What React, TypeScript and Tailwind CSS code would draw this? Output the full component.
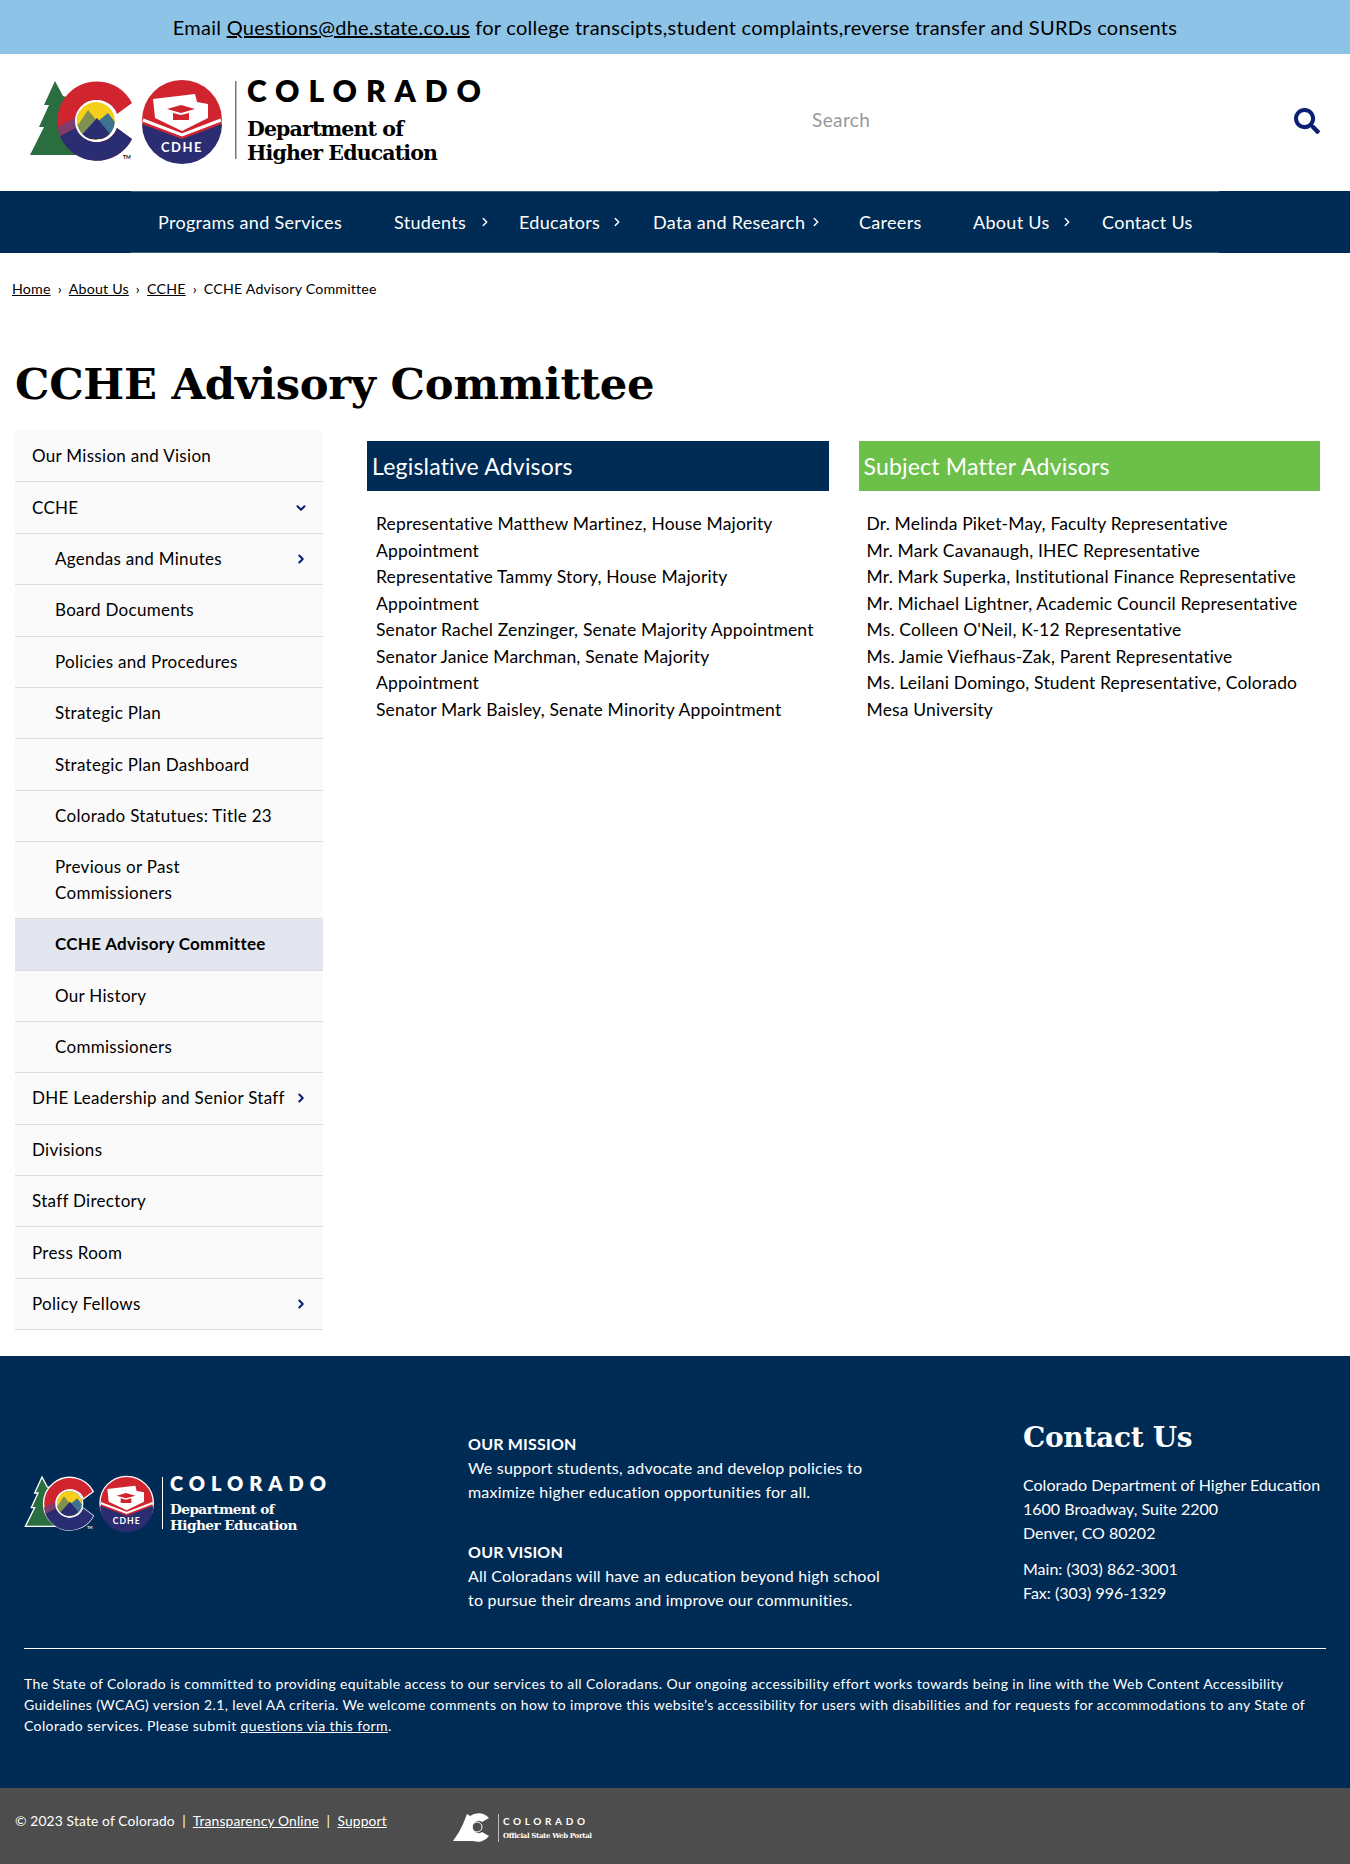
import { ChevronDown, ChevronRight } from "lucide-react";

const sans = "font-['Lato','Noto_Sans',sans-serif]";

const navItems = [
  { label: "Programs and Services", width: "w-[236px]", arrow: "" },
  { label: "Students", width: "w-[125px]", arrow: "mr-0" },
  { label: "Educators", width: "w-[134px]", arrow: "mr-[2px]" },
  { label: "Data and Research", width: "w-[206px]", arrow: "mr-[9px]" },
  { label: "Careers", width: "w-[114px]", arrow: "" },
  { label: "About Us", width: "w-[129px]", arrow: "mr-[1px]" },
  { label: "Contact Us", width: "w-[140px]", arrow: "" },
];

const sideItems = [
  { label: "Our Mission and Vision" },
  { label: "CCHE", open: true },
  { label: "Agendas and Minutes", sub: true, arrow: true },
  { label: "Board Documents", sub: true },
  { label: "Policies and Procedures", sub: true },
  { label: "Strategic Plan", sub: true },
  { label: "Strategic Plan Dashboard", sub: true },
  { label: "Colorado Statutues: Title 23", sub: true },
  { label: "Previous or Past Commissioners", sub: true },
  { label: "CCHE Advisory Committee", sub: true, active: true },
  { label: "Our History", sub: true },
  { label: "Commissioners", sub: true },
  { label: "DHE Leadership and Senior Staff", arrow: true },
  { label: "Divisions" },
  { label: "Staff Directory" },
  { label: "Press Room" },
  { label: "Policy Fellows", arrow: true },
];

const legislative = [
  "Representative Matthew Martinez, House Majority\nAppointment",
  "Representative Tammy Story, House Majority\nAppointment",
  "Senator Rachel Zenzinger, Senate Majority Appointment",
  "Senator Janice Marchman, Senate Majority\nAppointment",
  "Senator Mark Baisley, Senate Minority Appointment",
];

const subject = [
  "Dr. Melinda Piket-May, Faculty Representative",
  "Mr. Mark Cavanaugh, IHEC Representative",
  "Mr. Mark Superka, Institutional Finance Representative",
  "Mr. Michael Lightner, Academic Council Representative",
  "Ms. Colleen O'Neil, K-12 Representative",
  "Ms. Jamie Viefhaus-Zak, Parent Representative",
  "Ms. Leilani Domingo, Student Representative, Colorado Mesa University",
];

// state + CDHE marks, text colour flips for the footer version
const Logo = ({ dark = false, className = "" }: { dark?: boolean; className?: string }) => {
  const ink = dark ? "#ffffff" : "#000000";
  const edge = dark ? "#ffffff" : "none";
  const red = "#d0242e";
  const navy = "#2b2d73";
  return (
    <svg viewBox="0 0 452 84" className={`overflow-visible ${className}`}>
      <defs>
        <clipPath id="peak">
          <circle cx="66" cy="40" r="19" />
        </clipPath>
      </defs>
      <path d="M25 0 L14 24 L19 24 L9 46 L14 46 L0 74 L50 74 L50 20 L33 15 Z" fill="#2a6e3f" stroke={edge} strokeWidth="2" />
      <path d="M102 22 A39.500 39.500 0 1 0 102 58 L87 47 A21 21 0 1 1 87 33 Z" fill={red} stroke={edge} strokeWidth="2" />
      <path d="M102 58 L87 47 A21 21 0 0 1 47 46 L30 55 A39.500 39.500 0 0 0 102 58 Z" fill={navy} />
      <path d="M28 46 L45 37 L47 46 L30 55 Z" fill="#7d3d6f" />
      <g clipPath="url(#peak)">
        <rect x="45" y="19" width="42" height="42" fill="#f7cf1a" />
        <path d="M44 50 L58 29 L72 46 L66 62 Z" fill="#7f9150" />
        <path d="M66 42 L78 32 L90 48 L80 62 Z" fill="#3e7291" />
        <path d="M48 58 L67 37 L84 58 Z" fill={navy} />
      </g>
      <circle cx="66" cy="40" r="20" fill="none" stroke="#ffffff" strokeWidth="2" />
      <text x="93" y="78" fill={ink} fontSize="5" fontWeight="700" fontFamily="Lato, sans-serif">TM</text>
      <circle cx="152" cy="39" r="40" fill={red} stroke={edge} strokeWidth="2" />
      <path d="M112 43 L152 58 L192 43 A40 40 0 0 1 112 43 Z" fill={navy} />
      <path d="M113 39 L152 54 L191 39" fill="none" stroke="#ffffff" strokeWidth="3" />
      <path d="M123 18 L165 13 L167 21 L178 23 L178 37 L152 50 L125 37 Z" fill="#ffffff" />
      <path d="M137 28 L151 24 L165 28 L151 32 Z M143 32 L151 34 L159 32 L159 39 L143 39 Z" fill={red} />
      <text x="152" y="71" textAnchor="middle" fill="#ffffff" fontSize="13" fontWeight="700" fontFamily="Lato, sans-serif" letterSpacing="1.5">CDHE</text>
      <rect x="205" y="0" width="1.5" height="78" fill={dark ? "#ffffff" : "#777777"} />
      <text x="217" y="21" fill={ink} fontSize="30" fontWeight="800" fontFamily="Lato, sans-serif" textLength="234">COLORADO</text>
      <text x="217" y="55" fill={ink} fontSize="20.500" fontWeight="700" fontFamily="'DejaVu Serif', serif" textLength="157">Department of</text>
      <text x="217" y="79" fill={ink} fontSize="20.500" fontWeight="700" fontFamily="'DejaVu Serif', serif" textLength="191">Higher Education</text>
    </svg>
  );
};

const App = () => {
  return (
    <div className={`${sans} w-[1350px] bg-white text-black`}>
      <div className="h-[54px] bg-[#8dc3e6] flex items-center justify-center text-[20px] tracking-[0.25px]">
        <p>
          Email <a className="underline">Questions@dhe.state.co.us</a> for college transcipts,student complaints,reverse transfer and SURDs consents
        </p>
      </div>

      <header className="h-[137px] flex items-center">
        <div className="w-[812px] shrink-0 pl-[30px]">
          <Logo className="w-[452px] h-[84px]" />
        </div>
        <span className="text-[19px] text-[#999999] tracking-[0.4px] mb-[4px]">Search</span>
        <svg viewBox="0 0 512 512" className="w-[26px] h-[26px] ml-[424px] mb-[3px] fill-[#0b1f75]">
          <path d="M505 442.7L405.3 343c-4.5-4.5-10.6-7-17-7H372c27.6-35.3 44-79.7 44-128C416 93.1 322.900 0 208 0S0 93.100 0 208s93.100 208 208 208c48.300 0 92.700-16.400 128-44v16.300c0 6.400 2.500 12.500 7 17l99.700 99.700c9.400 9.400 24.600 9.400 33.900 0l28.300-28.300c9.400-9.400 9.400-24.600.1-34zM208 336c-70.700 0-128-57.200-128-128 0-70.700 57.200-128 128-128 70.700 0 128 57.200 128 128 0 70.700-57.200 128-128 128z" />
        </svg>
      </header>

      <nav className="h-[62px] bg-[#002b55]">
        <ul className="h-full ml-[131px] w-[1088px] flex items-center border-y border-[#3d5f80] text-white text-[18px] tracking-[0.3px]">
          {navItems.map((item) => (
            <li key={item.label} className={`${item.width} shrink-0 flex items-center pl-[27px]`}>
              <span>{item.label}</span>
              {item.arrow && <ChevronRight className={`w-[14px] h-[14px] ml-auto ${item.arrow}`} strokeWidth={2.5} />}
            </li>
          ))}
        </ul>
      </nav>

      <div className="pl-[12px] pt-[25px] text-[14.2px] h-[66px] tracking-[0.2px]">
        <a className="underline">Home</a>
        <span className="mx-[7px]">›</span>
        <a className="underline">About Us</a>
        <span className="mx-[7px]">›</span>
        <a className="underline">CCHE</a>
        <span className="mx-[7px]">›</span>
        <span>CCHE Advisory Committee</span>
      </div>

      <h1 className="pl-[15px] pt-[33px] h-[112px] text-[43.3px] leading-[64px] font-bold font-['DejaVu_Serif',serif] tracking-[-0.3px]">
        CCHE Advisory Committee
      </h1>

      <div className="flex pl-[15px] pr-[30px] h-[925px]">
        <aside className="w-[308px] shrink-0">
          {sideItems.map((item) => (
            <div
              key={item.label}
              className={`relative flex items-center min-h-[51.4px] border-b border-[#dddddd] text-[17px] leading-[26px] tracking-[0.3px] py-[12px] pr-[15px] ${item.sub ? "pl-[40px]" : "pl-[17px]"} ${item.active ? "bg-[#e3e6ee] font-bold" : "bg-[#fafafa]"}`}
            >
              <span className={item.sub && item.label.startsWith("Previous") ? "w-[180px]" : ""}>{item.label}</span>
              {item.arrow && <ChevronRight className="ml-auto w-[14px] h-[14px] text-[#0b1f75] shrink-0" strokeWidth={3.5} />}
              {item.open && <ChevronDown className="ml-auto w-[14px] h-[14px] text-[#0b1f75] shrink-0" strokeWidth={3.5} />}
            </div>
          ))}
        </aside>

        <main className="flex-1 flex gap-[30px] pl-[44px] pt-[10px]">
          <section className="flex-1">
            <h2 className="h-[50px] bg-[#002b55] text-white text-[23px] leading-[50px] pl-[5px] tracking-[0.2px]">Legislative Advisors</h2>
            <div className="pt-[20px] pl-[9px] pr-[8px] text-[17.5px] leading-[26.5px] tracking-[0.17px] whitespace-pre-line">
              {legislative.map((name) => (
                <p key={name}>{name}</p>
              ))}
            </div>
          </section>
          <section className="flex-1">
            <h2 className="h-[50px] bg-[#6cc04a] text-white text-[23px] leading-[50px] pl-[5px] tracking-[0.2px]">Subject Matter Advisors</h2>
            <div className="pt-[20px] pl-[8px] pr-[8px] text-[17.5px] leading-[26.5px] tracking-[0.17px]">
              {subject.map((name) => (
                <p key={name}>{name}</p>
              ))}
            </div>
          </section>
        </main>
      </div>

      <footer className="h-[432px] bg-[#002b55] text-white px-[24px]">
        <div className="flex h-[293px] border-b border-[#ffffff]">
          <div className="w-[444px] shrink-0 pt-[121px] pl-[1px]">
            <Logo dark className="w-[302px] h-[56px]" />
          </div>
          <div className="w-[555px] shrink-0 pt-[76px] text-[16px] leading-[24px] tracking-[0.2px]">
            <h3 className="font-bold">OUR MISSION</h3>
            <p className="w-[410px]">We support students, advocate and develop policies to maximize higher education opportunities for all.</p>
            <h3 className="font-bold mt-[36px]">OUR VISION</h3>
            <p className="w-[420px]">All Coloradans will have an education beyond high school to pursue their dreams and improve our communities.</p>
          </div>
          <div className="pt-[62px] text-[16px] leading-[24px] whitespace-nowrap">
            <h2 className="text-[28px] leading-[40px] font-bold font-['DejaVu_Serif',serif] tracking-[-0.3px] mb-[15px]">Contact Us</h2>
            <p>Colorado Department of Higher Education</p>
            <p>1600 Broadway, Suite 2200</p>
            <p>Denver, CO 80202</p>
            <p className="mt-[12px]">Main: (303) 862-3001</p>
            <p>Fax: (303) 996-1329</p>
          </div>
        </div>
        <p className="pt-[24px] text-[14px] leading-[21px] tracking-[0.38px]">
          The State of Colorado is committed to providing equitable access to our services to all Coloradans. Our ongoing accessibility effort works towards being in line with the Web Content Accessibility Guidelines (WCAG) version 2.1, level AA criteria. We welcome comments on how to improve this website’s accessibility for users with disabilities and for requests for accommodations to any State of Colorado services. Please submit <a className="underline">questions via this form</a>.
        </p>
      </footer>

      <div className="h-[76px] bg-[#4d4d4d] text-white flex pl-[15px]">
        <p className="w-[438px] shrink-0 pt-[22px] text-[13.8px] leading-[21px] tracking-[0.15px]">
          © 2023 State of Colorado &nbsp;|&nbsp; <a className="underline">Transparency Online</a> &nbsp;|&nbsp; <a className="underline">Support</a>
        </p>
        <svg viewBox="0 0 140 32" className="w-[140px] h-[32px] mt-[24px]">
          <path d="M14 2 L10 12 L6 20 L0 29 L20 29 A14 14 0 0 0 36 24 L29 20 A6 6 0 1 1 29 10 L36 6 A14 14 0 0 0 17 4 Z" fill="#ffffff" />
          <circle cx="24" cy="15" r="5" fill="none" stroke="#ffffff" strokeWidth="1" />
          <rect x="45" y="2" width="1" height="28" fill="#bbbbbb" />
          <text x="50" y="13" fill="#ffffff" fontSize="10" fontWeight="700" fontFamily="Lato, sans-serif" textLength="82">COLORADO</text>
          <text x="50" y="26" fill="#ffffff" fontSize="7" fontWeight="700" fontFamily="'DejaVu Serif', serif" textLength="89">Official State Web Portal</text>
        </svg>
      </div>
    </div>
  );
};

export default App;
